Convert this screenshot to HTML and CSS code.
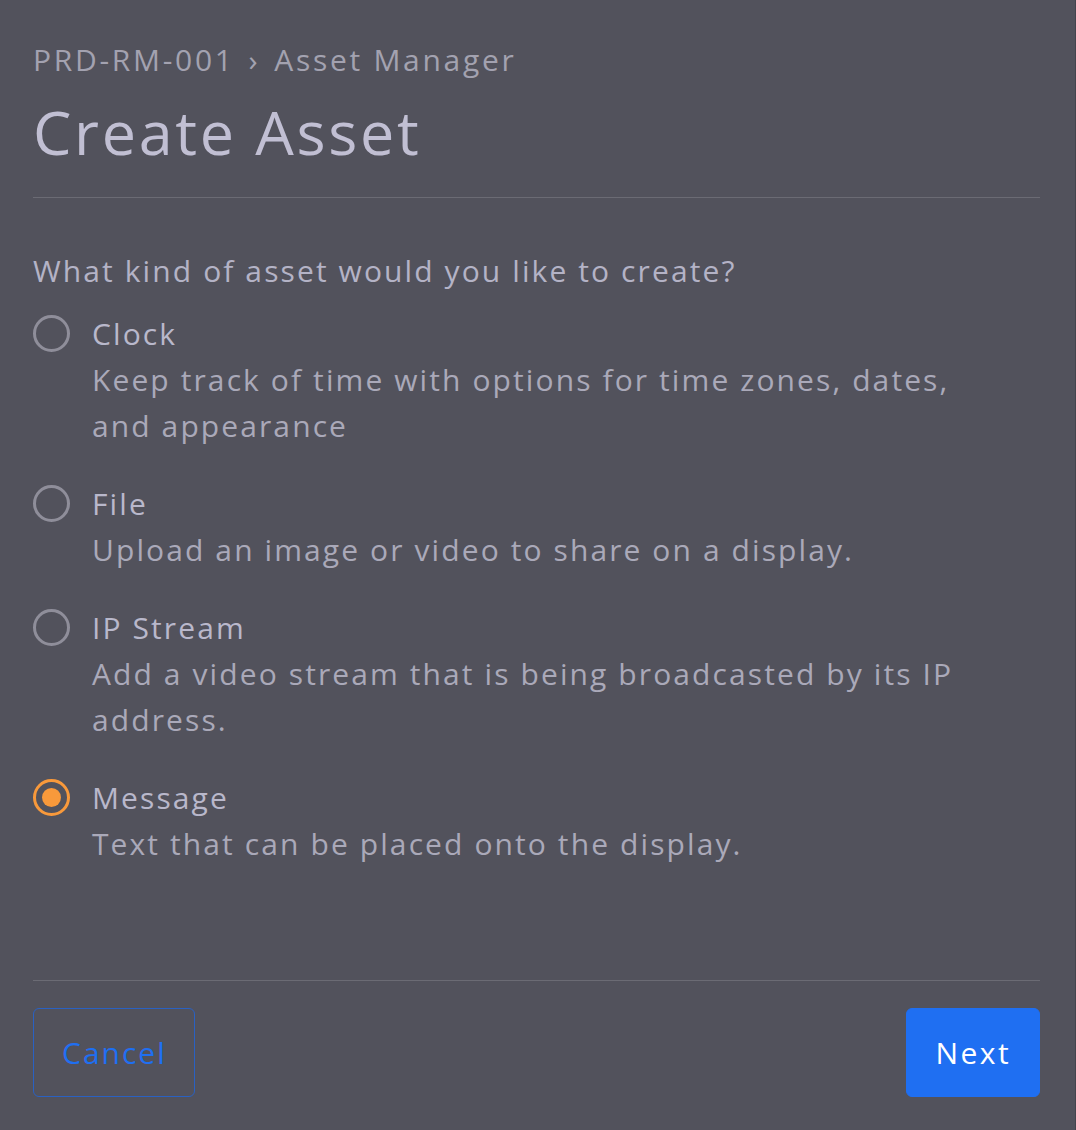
FILE: index.html
```html
<!DOCTYPE html>
<html lang="en">
<head>
<meta charset="utf-8">
<title>Create Asset</title>
<link rel="stylesheet" href="styles.css">
</head>
<body>
<div class="page">
  <header class="header">
    <nav class="crumbs"><span>PRD-RM-001</span><span class="sep">›</span><span>Asset Manager</span></nav>
    <h1 class="title">Create Asset</h1>
  </header>
  <main class="body">
    <p class="question">What kind of asset would you like to create?</p>
    <div class="options">
      <label class="option">
        <input type="radio" name="kind" class="radio">
        <span class="text">
          <span class="name">Clock</span>
          <span class="desc">Keep track of time with options for time zones, dates, and appearance</span>
        </span>
      </label>
      <label class="option">
        <input type="radio" name="kind" class="radio">
        <span class="text">
          <span class="name">File</span>
          <span class="desc">Upload an image or video to share on a display.</span>
        </span>
      </label>
      <label class="option">
        <input type="radio" name="kind" class="radio">
        <span class="text">
          <span class="name">IP Stream</span>
          <span class="desc">Add a video stream that is being broadcasted by its IP address.</span>
        </span>
      </label>
      <label class="option">
        <input type="radio" name="kind" class="radio" checked>
        <span class="text">
          <span class="name">Message</span>
          <span class="desc">Text that can be placed onto the display.</span>
        </span>
      </label>
    </div>
  </main>
  <footer class="footer">
    <button class="btn btn-cancel" type="button">Cancel</button>
    <button class="btn btn-next" type="button">Next</button>
  </footer>
</div>
</body>
</html>
```

FILE: styles.css
```css
html, body {
  margin: 0;
  padding: 0;
  height: 100%;
  background: #52525c;
}
body {
  font-family: "Open Sans", "DejaVu Sans", sans-serif;
  color: #b4b3c6;
  letter-spacing: 2.1px;
}
.page {
  box-sizing: border-box;
  height: 100vh;
  padding: 0 35px 0 33px;
  display: flex;
  flex-direction: column;
  border-right: 1px solid #44444d;
}
.header {
  padding-top: 37px;
  border-bottom: 1px solid #6b6b74;
  padding-bottom: 22px;
}
.crumbs {
  font-size: 30px;
  line-height: 46px;
  color: #a3a2b0;
  display: flex;
  gap: 14px;
  letter-spacing: 2.7px;
}
.title {
  margin: 6px 0 0;
  font-size: 61px;
  font-weight: 400;
  line-height: 86px;
  color: #c1bfd3;
  letter-spacing: 2.7px;
}
.body {
  flex: 1;
  padding-top: 50px;
  font-size: 30px;
  line-height: 46px;
}
.question {
  margin: 0 0 17px;
  color: #b4b3c6;
}
.options {
  display: flex;
  flex-direction: column;
  gap: 32px;
}
.option {
  display: flex;
  align-items: flex-start;
  gap: 22px;
  cursor: pointer;
}
.radio {
  appearance: none;
  -webkit-appearance: none;
  margin: 4px 0 0;
  width: 37px;
  height: 37px;
  flex: none;
  border-radius: 50%;
  border: 3px solid #8f8e9a;
  box-sizing: border-box;
  display: grid;
  place-items: center;
}
.radio:checked {
  border-color: #f8993b;
}
.radio:checked::after {
  content: "";
  width: 19px;
  height: 19px;
  border-radius: 50%;
  background: #f8993b;
}
.text {
  display: flex;
  flex-direction: column;
  max-width: 900px;
}
.name {
  color: #b9b8cb;
}
.desc {
  color: #aaa9b9;
}
.footer {
  border-top: 1px solid #6b6b74;
  padding: 27px 0 33px;
  display: flex;
  justify-content: space-between;
}
.btn {
  font-family: inherit;
  font-size: 30px;
  letter-spacing: 2.4px;
  height: 89px;
  border-radius: 6px;
  padding: 0 28px 0 29px;
  cursor: pointer;
}
.btn-cancel {
  background: transparent;
  border: 1px solid #2a61c2;
  color: #1f6ff2;
  letter-spacing: 2px;
  padding: 0 27px 0 28px;
}
.btn-next {
  background: #1f6ff2;
  border: 1px solid #1f6ff2;
  color: #ffffff;
}
```
